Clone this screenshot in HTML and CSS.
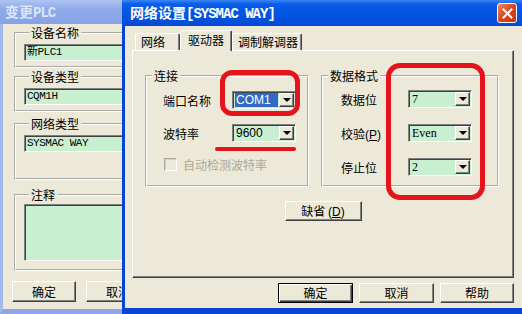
FILE: index.html
```html
<!DOCTYPE html>
<html lang="zh-CN">
<head>
  <meta charset="UTF-8" />
  <meta name="viewport" content="width=device-width, initial-scale=1.0"/>
  <title>网络设置</title>
  <link rel="stylesheet" href="styles.css">
</head>
<body>
  <div class="desk">

    <!-- 뒤쪽 창: 变更PLC -->
    <div class="win win-back">
      <div class="titlebar inactive"><span class="title">变更<span class="lat">PLC</span></span></div>
      <div class="win-body back-body">
        <fieldset class="group back-group g1"><legend>设备名称</legend><div class="field">新PLC1</div></fieldset>
        <fieldset class="group back-group g2"><legend>设备类型</legend><div class="field">CQM1H</div></fieldset>
        <fieldset class="group back-group g3"><legend>网络类型</legend><div class="field">SYSMAC WAY</div></fieldset>
        <fieldset class="group back-group g4"><legend>注释</legend><div class="field memo"></div></fieldset>
        <div class="back-buttons">
          <button class="btn">确定</button>
          <button class="btn">取消</button>
        </div>
      </div>
    </div>

    <!-- 앞쪽 창: 网络设置 -->
    <div class="win win-front">
      <div class="titlebar active">
        <span class="title">网络设置<span class="lat">[SYSMAC WAY]</span></span>
        <span class="close">
          <svg width="11" height="11" viewBox="0 0 11 11"><path d="M1.5 1.5 L9.5 9.5 M9.5 1.5 L1.5 9.5" stroke="#fff" stroke-width="2" stroke-linecap="square"/></svg>
        </span>
      </div>
      <div class="win-body front-body">
        <div class="tabs">
          <div class="tab tab-net">网络</div>
          <div class="tab tab-drv on">驱动器</div>
          <div class="tab tab-modem">调制解调器</div>
        </div>

        <div class="panel">
          <div class="group-row">
            <fieldset class="group g-conn">
              <legend>连接</legend>
              <div class="form-grid conn-grid">
                <span>端口名称</span>
                <div class="combo"><span class="combo-text sel">COM1</span><span class="drop"></span></div>
                <span>波特率</span>
                <div class="combo"><span class="combo-text">9600</span><span class="drop"></span></div>
                <div class="check"><span class="box"></span>自动检测波特率</div>
              </div>
            </fieldset>
            <fieldset class="group g-fmt">
              <legend>数据格式</legend>
              <div class="form-grid fmt-grid">
                <span>数据位</span>
                <div class="combo"><span class="combo-text mono">7</span><span class="drop"></span></div>
                <span>校验<span class="acc">(<u>P</u>)</span></span>
                <div class="combo"><span class="combo-text mono">Even</span><span class="drop"></span></div>
                <span>停止位</span>
                <div class="combo"><span class="combo-text mono">2</span><span class="drop"></span></div>
              </div>
            </fieldset>
          </div>
          <div class="default-row">
            <button class="btn btn-reset">缺省 <span class="acc">(<u>D</u>)</span></button>
          </div>
        </div>

        <div class="dlg-buttons">
          <button class="btn def">确定</button>
          <button class="btn">取消</button>
          <button class="btn btn-help">帮助</button>
        </div>
      </div>
    </div>

    <!-- 빨간 표시 -->
    <div class="mark mark-com"></div>
    <div class="mark-line"></div>
    <div class="mark mark-fmt"></div>
  </div>
</body>
</html>
```

FILE: styles.css
```css
/* 기본 설정 */
* {
  box-sizing: border-box;
}

body {
  margin: 0;
  width: 522px;
  height: 314px;
  overflow: hidden;
  background-color: #ece9d8;
  font-family: "Noto Sans CJK SC", sans-serif;
  font-size: 12px;
  color: #000;
}

.desk {
  position: relative;
  width: 522px;
  height: 314px;
}

/* 창 */
.win {
  position: absolute;
  top: 0;
  height: 314px;
  display: flex;
  flex-direction: column;
}

.win-back {
  left: 0;
  width: 150px;
}

.win-front {
  left: 122px;
  width: 403px;
}

.titlebar {
  flex: none;
  display: flex;
  align-items: center;
  justify-content: space-between;
  font-weight: bold;
  font-size: 14px;
  line-height: 16px;
  white-space: nowrap;
}

.titlebar .lat {
  font-family: "Liberation Mono", monospace;
  letter-spacing: -1px;
}

.titlebar.inactive {
  height: 24px;
  padding-left: 5px;
  background: linear-gradient(#aec4f2, #90abe9 35%, #87a3e6);
  color: #dce6fa;
}

.titlebar.active {
  height: 26px;
  padding: 0 8px 0 8px;
  background: linear-gradient(#3b87f6 0, #0a5de8 4px, #0456e2 50%, #0349d7 100%);
  color: #fff;
}

.close {
  width: 20px;
  height: 20px;
  display: flex;
  align-items: center;
  justify-content: center;
  border: 1px solid #fff;
  border-radius: 3px;
  background: linear-gradient(135deg, #ec8a6c, #d8461e 50%, #c23510);
}

.win-body {
  flex: 1;
  display: flex;
  flex-direction: column;
  background-color: #ece9d8;
}

.back-body {
  border-left: 3px solid #a3b9ee;
  border-bottom: 5px solid #8ca6e8;
  padding: 2px 0 0 11px;
}

.front-body {
  border: 3px solid #0843d8;
  border-top: 0;
  border-bottom-width: 6px;
  padding: 4px 0 0 7px;
}

/* 그룹 박스 */
.group {
  margin: 0;
  padding: 0;
  min-width: 0;
  border: 2px groove #fff;
}

.group legend {
  padding: 0 2px;
  margin-left: 5px;
  line-height: 14px;
}

.back-group {
  width: 125px;
  padding: 4px 0 0 8px;
}

.g1 { height: 42px; }
.g2 { height: 42px; margin-top: 2px; }
.g3 { height: 63px; margin-top: 5px; }
.g4 { height: 83px; margin-top: 8px; padding-top: 2px; }

.field {
  width: 110px;
  height: 17px;
  padding-left: 2px;
  border: 1px solid;
  border-color: #808080 #fff #fff #808080;
  box-shadow: inset 1px 1px #404040;
  background-color: #c7efd0;
  font-family: "Liberation Mono", "Noto Sans CJK SC", monospace;
  font-size: 11px;
  line-height: 15px;
  letter-spacing: -0.5px;
}

.field.memo {
  height: 57px;
}

/* 버튼 */
.btn {
  height: 20px;
  padding: 0;
  font-family: inherit;
  font-size: 12px;
  line-height: 16px;
  color: #000;
  background-color: #ece9d8;
  border: 1px solid;
  border-color: #fff #404040 #404040 #fff;
  box-shadow: inset -1px -1px #808080;
}

.btn.def {
  border-color: #000;
  box-shadow: inset 1px 1px #fff, inset -1px -1px #404040, inset -2px -2px #808080;
}

.back-buttons {
  display: flex;
  gap: 10px;
  margin: 10px 0 0 -2px;
}

.back-buttons .btn {
  width: 75px;
  height: 21px;
}

/* 탭 */
.tabs {
  display: flex;
  align-items: flex-end;
  height: 20px;
  padding-left: 3px;
}

.tab {
  height: 17px;
  padding-left: 5px;
  line-height: 15px;
  border: 1px solid;
  border-bottom: 0;
  border-color: #fff #404040 transparent #fff;
  border-radius: 2px 2px 0 0;
  box-shadow: inset -1px 0 #808080;
}

.tab-net { width: 45px; }
.tab-modem { width: 70px; }

.tab.on {
  position: relative;
  z-index: 1;
  width: 52px;
  height: 21px;
  margin-bottom: -1px;
  padding-left: 7px;
  line-height: 18px;
  background-color: #ece9d8;
}

.panel {
  width: 382px;
  height: 228px;
  padding-top: 18px;
  display: flex;
  flex-direction: column;
  border: 1px solid;
  border-color: #fff #404040 #404040 #fff;
  box-shadow: inset -1px -1px #808080;
}

.group-row {
  display: flex;
  gap: 12px;
  padding-left: 12px;
}

.g-conn {
  width: 164px;
  height: 118px;
}

.g-fmt {
  width: 178px;
  height: 118px;
}

.form-grid {
  display: grid;
  align-items: center;
}

.conn-grid {
  grid-template-columns: 69px 64px;
  row-gap: 15px;
  padding: 8px 0 0 16px;
}

.fmt-grid {
  grid-template-columns: 67px 64px;
  row-gap: 16px;
  padding: 7px 0 0 18px;
}

.acc {
  font-family: "Liberation Sans", sans-serif;
}

/* 콤보 박스 */
.combo {
  display: flex;
  width: 64px;
  height: 18px;
  padding: 1px 1px 1px 2px;
  border: 1px solid;
  border-color: #808080 #fff #fff #808080;
  box-shadow: inset 1px 1px #404040;
  background-color: #c7efd0;
}

.combo-text {
  flex: 1;
  padding-left: 1px;
  margin-right: 1px;
  font-family: "Liberation Sans", sans-serif;
  font-size: 12px;
  line-height: 14px;
}

.combo-text.sel {
  background-color: #316ac5;
  color: #fff;
}

.combo-text.mono {
  font-family: "Liberation Serif", serif;
  font-size: 12px;
}

.drop {
  width: 15px;
  height: 14px;
  display: flex;
  align-items: center;
  justify-content: center;
  background-color: #ece9d8;
  border: 1px solid;
  border-color: #fff #404040 #404040 #fff;
  box-shadow: inset -1px -1px #808080;
}

.drop::after {
  content: "";
  border-top: 4px solid #000;
  border-left: 4px solid transparent;
  border-right: 4px solid transparent;
}

/* 체크박스 (비활성) */
.check {
  grid-column: 1 / -1;
  display: flex;
  align-items: center;
  gap: 6px;
  margin: -1px 0 0 1px;
  color: #aca899;
}

.check .box {
  width: 13px;
  height: 13px;
  border: 1px solid;
  border-color: #aca899 #fff #fff #aca899;
  box-shadow: inset 1px 1px #d4d0c8;
}

.default-row {
  display: flex;
  justify-content: center;
  margin-top: 14px;
}

.btn-reset {
  width: 77px;
}

.dlg-buttons {
  display: flex;
  justify-content: flex-end;
  gap: 6px;
  width: 382px;
  margin-top: 5px;
}

.dlg-buttons .btn {
  width: 75px;
}

.dlg-buttons .btn-help {
  width: 74px;
}

/* 빨간 표시 (스크린샷 위 주석) */
.mark {
  position: absolute;
  border: 5px solid #e5141c;
  border-radius: 12px;
}

.mark-com {
  left: 220px;
  top: 70px;
  width: 80px;
  height: 46px;
}

.mark-fmt {
  left: 386px;
  top: 63px;
  width: 99px;
  height: 137px;
  border-radius: 14px;
}

.mark-line {
  position: absolute;
  left: 215px;
  top: 147px;
  width: 81px;
  height: 4px;
  border-radius: 2px;
  background-color: #e5141c;
}
```
